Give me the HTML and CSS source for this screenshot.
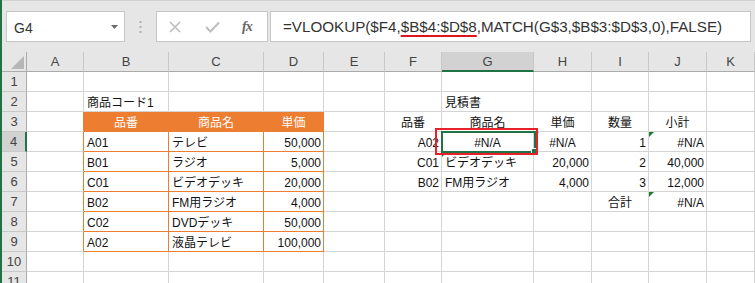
FILE: index.html
```html
<!DOCTYPE html>
<html lang="ja">
<head>
<meta charset="utf-8">
<link rel="stylesheet" href="styles.css">
</head>
<body>
<div class="app">
  <div class="fbar">
    <div class="namebox">
      <span class="nb-text">G4</span>
      <svg class="nb-arrow" width="7" height="4" viewBox="0 0 7 4"><polygon points="0,0 7,0 3.5,4" fill="#6b6b6b"/></svg>
    </div>
    <div class="grip">
      <svg width="3" height="12" viewBox="0 0 3 12"><rect x="0.5" y="0" width="2" height="2" fill="#b0b0b0"/><rect x="0.5" y="5" width="2" height="2" fill="#b0b0b0"/><rect x="0.5" y="10" width="2" height="2" fill="#b0b0b0"/></svg>
    </div>
    <div class="fbtns">
      <svg class="ic-x" width="12" height="12" viewBox="0 0 12 12"><path d="M1 1 L11 11 M11 1 L1 11" stroke="#bdbdbd" stroke-width="1.6" fill="none"/></svg>
      <svg class="ic-ok" width="15" height="12" viewBox="0 0 15 12"><path d="M1 6 L5.5 10.5 L14 1.5" stroke="#bdbdbd" stroke-width="2" fill="none"/></svg>
      <span class="fx">fx</span>
    </div>
    <div class="formula">=VLOOKUP($F4,<span class="ul">$B$4:$D$8</span>,MATCH(G$3,$B$3:$D$3,0),FALSE)</div>
  </div>
  <div class="sheet">
    <!-- header -->
    <div class="c corner"><svg width="13" height="13" viewBox="0 0 13 13"><polygon points="13,0 13,13 0,13" fill="#b6b6b6"/></svg></div>
    <div class="c ch">A</div>
    <div class="c ch">B</div>
    <div class="c ch">C</div>
    <div class="c ch">D</div>
    <div class="c ch">E</div>
    <div class="c ch">F</div>
    <div class="c ch hsel-col">G</div>
    <div class="c ch">H</div>
    <div class="c ch">I</div>
    <div class="c ch">J</div>
    <div class="c ch">K</div>
    <!-- row 1 -->
    <div class="c rh">1</div>
    <div class="c"></div><div class="c"></div><div class="c"></div><div class="c"></div><div class="c"></div><div class="c"></div><div class="c"></div><div class="c"></div><div class="c"></div><div class="c"></div><div class="c"></div>
    <!-- row 2 -->
    <div class="c rh">2</div>
    <div class="c"></div>
    <div class="c">商品コード1</div>
    <div class="c"></div>
    <div class="c"></div>
    <div class="c"></div>
    <div class="c"></div>
    <div class="c">見積書</div>
    <div class="c"></div>
    <div class="c"></div>
    <div class="c"></div>
    <div class="c"></div>
    <!-- row 3 -->
    <div class="c rh">3</div>
    <div class="c obl"></div>
    <div class="c oh">品番</div>
    <div class="c oh">商品名</div>
    <div class="c oh">単価</div>
    <div class="c"></div>
    <div class="c ctr">品番</div>
    <div class="c ctr">商品名</div>
    <div class="c ctr">単価</div>
    <div class="c ctr">数量</div>
    <div class="c ctr">小計</div>
    <div class="c"></div>
    <!-- row 4 -->
    <div class="c rh hsel-row">4</div>
    <div class="c obl"></div>
    <div class="c ob">A01</div>
    <div class="c ob">テレビ</div>
    <div class="c ob r">50,000</div>
    <div class="c"></div>
    <div class="c r">A02</div>
    <div class="c ctr active">#N/A<span class="selbox"></span><span class="handle"></span><span class="redbox"></span></div>
    <div class="c ctr tri">#N/A</div>
    <div class="c r">1</div>
    <div class="c r tri">#N/A</div>
    <div class="c"></div>
    <!-- row 5 -->
    <div class="c rh">5</div>
    <div class="c obl"></div>
    <div class="c ob">B01</div>
    <div class="c ob">ラジオ</div>
    <div class="c ob r">5,000</div>
    <div class="c"></div>
    <div class="c r">C01</div>
    <div class="c tri">ビデオデッキ</div>
    <div class="c r">20,000</div>
    <div class="c r">2</div>
    <div class="c r">40,000</div>
    <div class="c"></div>
    <!-- row 6 -->
    <div class="c rh">6</div>
    <div class="c obl"></div>
    <div class="c ob">C01</div>
    <div class="c ob">ビデオデッキ</div>
    <div class="c ob r">20,000</div>
    <div class="c"></div>
    <div class="c r">B02</div>
    <div class="c">FM用ラジオ</div>
    <div class="c r">4,000</div>
    <div class="c r">3</div>
    <div class="c r">12,000</div>
    <div class="c"></div>
    <!-- row 7 -->
    <div class="c rh">7</div>
    <div class="c obl"></div>
    <div class="c ob">B02</div>
    <div class="c ob">FM用ラジオ</div>
    <div class="c ob r">4,000</div>
    <div class="c"></div>
    <div class="c"></div>
    <div class="c"></div>
    <div class="c"></div>
    <div class="c ctr">合計</div>
    <div class="c r tri">#N/A</div>
    <div class="c"></div>
    <!-- row 8 -->
    <div class="c rh">8</div>
    <div class="c obl"></div>
    <div class="c ob">C02</div>
    <div class="c ob">DVDデッキ</div>
    <div class="c ob r">50,000</div>
    <div class="c"></div><div class="c"></div><div class="c"></div><div class="c"></div><div class="c"></div><div class="c"></div><div class="c"></div>
    <!-- row 9 -->
    <div class="c rh">9</div>
    <div class="c obl"></div>
    <div class="c ob">A02</div>
    <div class="c ob">液晶テレビ</div>
    <div class="c ob r">100,000</div>
    <div class="c"></div><div class="c"></div><div class="c"></div><div class="c"></div><div class="c"></div><div class="c"></div><div class="c"></div>
    <!-- row 10 -->
    <div class="c rh">10</div>
    <div class="c"></div><div class="c"></div><div class="c"></div><div class="c"></div><div class="c"></div><div class="c"></div><div class="c"></div><div class="c"></div><div class="c"></div><div class="c"></div><div class="c"></div>
    <!-- row 11 -->
    <div class="c rh">11</div>
    <div class="c"></div><div class="c"></div><div class="c"></div><div class="c"></div><div class="c"></div><div class="c"></div><div class="c"></div><div class="c"></div><div class="c"></div><div class="c"></div><div class="c"></div>
  </div>
</div>
</body>
</html>
```
FILE: styles.css
```css
html, body {
  margin: 0;
  padding: 0;
}
body {
  background: #e6e6e6;
  font-family: "Liberation Sans", "Noto Sans CJK JP", sans-serif;
  overflow: hidden;
  width: 755px;
  height: 283px;
}
.app {
  border-left: 2px solid #217346;
  height: 283px;
  box-sizing: border-box;
  overflow: hidden;
}
.fbar {
  height: 52px;
  box-sizing: border-box;
  border-top: 1px solid #d2d2d2;
  display: flex;
  align-items: flex-start;
  padding: 10px 4px 0 4px;
}
.namebox {
  width: 119px;
  height: 31px;
  box-sizing: border-box;
  background: #fff;
  border: 1px solid #c6c6c6;
  display: flex;
  align-items: center;
  justify-content: space-between;
  padding: 2px 6px 0 7px;
  font-size: 14px;
  color: #333;
}
.nb-arrow {
  margin-top: -2px;
}
.grip {
  width: 31px;
  height: 31px;
  display: flex;
  align-items: center;
  justify-content: center;
}
.fbtns {
  width: 112px;
  height: 31px;
  box-sizing: border-box;
  background: #fff;
  border: 1px solid #c6c6c6;
  display: flex;
  align-items: center;
  padding-left: 12px;
}
.ic-ok {
  margin-left: 24px;
}
.fx {
  margin-left: 22px;
  font-family: "Liberation Serif", serif;
  font-style: italic;
  font-weight: bold;
  font-size: 14px;
  color: #666;
  letter-spacing: -1px;
}
.formula {
  flex: 1;
  margin-left: 2px;
  height: 31px;
  box-sizing: border-box;
  background: #fff;
  border: 1px solid #c6c6c6;
  padding-left: 12px;
  font-size: 15.2px;
  line-height: 29px;
  color: #333;
  white-space: nowrap;
  overflow: hidden;
}
.ul {
  text-decoration: underline;
  text-decoration-color: #e0141e;
  text-decoration-thickness: 2px;
  text-underline-offset: 3px;
}
.sheet {
  display: grid;
  grid-template-columns: 25px 57px 85px 95px 60px 61px 57px 92px 58px 57px 58px 48px;
  grid-auto-rows: 20px;
  background: #fff;
}
.c {
  box-sizing: border-box;
  border-right: 1px solid #d4d4d4;
  border-bottom: 1px solid #d4d4d4;
  font-size: 12px;
  line-height: 20px;
  padding: 1px 3px 0 3px;
  white-space: nowrap;
  color: #111;
  position: relative;
}
.corner {
  background: #e6e6e6;
  border-right-color: #ababab;
  border-bottom-color: #ababab;
  padding: 0;
  display: flex;
  align-items: flex-end;
  justify-content: flex-end;
}
.corner svg {
  margin: 0 2px 2px 0;
}
.ch {
  background: #e6e6e6;
  border-right-color: #c8c8c8;
  border-bottom-color: #ababab;
  text-align: center;
  font-size: 13px;
  color: #444;
  padding: 0;
}
.rh {
  background: #e6e6e6;
  border-right-color: #ababab;
  border-bottom-color: #c8c8c8;
  text-align: center;
  font-size: 13px;
  color: #444;
  padding: 0;
}
.hsel-col {
  background: #d2d2d2;
  border-bottom: 2px solid #217346;
  line-height: 19px;
}
.hsel-row {
  background: #d2d2d2;
  border-right: 2px solid #217346;
}
.oh {
  background: #ed7d31;
  color: #fff;
  text-align: center;
  border-right-color: #ed7d31;
  border-bottom-color: #ed7d31;
}
.ob {
  border-right-color: #ed7d31;
  border-bottom-color: #ed7d31;
}
.obl {
  border-right-color: #ed7d31;
}
.r {
  text-align: right;
  padding-right: 2px;
}
.ctr {
  text-align: center;
}
.tri::before {
  content: "";
  position: absolute;
  left: 0;
  top: 0;
  border-top: 5px solid #1d7a35;
  border-right: 5px solid transparent;
}
.active {
  z-index: 2;
}
.selbox {
  position: absolute;
  left: -1px;
  top: -1px;
  right: -3px;
  bottom: -2px;
  border: 2px solid #217346;
}
.handle {
  position: absolute;
  right: -5px;
  bottom: -4px;
  width: 5px;
  height: 5px;
  background: #217346;
  border: 1px solid #fff;
}
.redbox {
  position: absolute;
  left: -7px;
  top: -4px;
  right: -5px;
  bottom: -4px;
  border: 2px solid #e8202a;
}
```
